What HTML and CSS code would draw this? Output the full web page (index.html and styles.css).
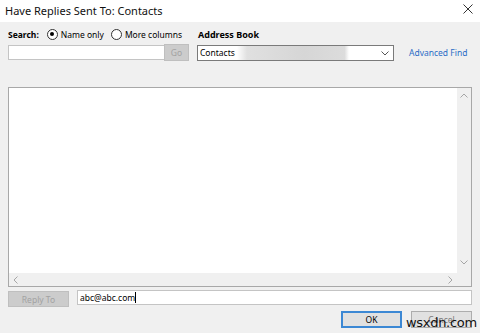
FILE: index.html
```html
<!DOCTYPE html>
<html>
  <head>
    <meta charset="utf-8" />
    <link rel="stylesheet" href="styles.css">
  </head>
  <body>
    <div id="dialog">
      <div class="titlebar">
        <span class="title">Have Replies Sent To: Contacts</span>
        <svg class="close" width="10" height="10" viewBox="0 0 10 10"><path d="M0.5 0.5L9.5 9.5M9.5 0.5L0.5 9.5" stroke="#333" stroke-width="1"/></svg>
      </div>
      <div class="panel">
        <div class="top">
          <div class="searchrow">
            <b>Search:</b>
            <span class="radio on"></span><span>Name only</span>
            <span class="radio"></span><span>More columns</span>
          </div>
          <b class="ablabel">Address Book</b>
          <span></span>
          <div class="searchbox"><span class="input"></span><span class="btn disabled go">Go</span></div>
          <div class="select">
            <span>Contacts</span><span class="blur"></span>
            <svg class="arrow" width="8" height="5" viewBox="0 0 8 5"><path d="M0.5 0.5L4 4L7.5 0.5" fill="none" stroke="#555" stroke-width="1"/></svg>
          </div>
          <a class="adv">Advanced Find</a>
        </div>
        <div class="list">
          <div class="listmain">
            <div class="area"></div>
            <div class="vscroll">
              <svg width="8" height="5" viewBox="0 0 8 5"><path d="M0.5 4.5L4 1L7.5 4.5" fill="none" stroke="#a6a6a6"/></svg>
              <svg width="8" height="5" viewBox="0 0 8 5"><path d="M0.5 0.5L4 4L7.5 0.5" fill="none" stroke="#a6a6a6"/></svg>
            </div>
          </div>
          <div class="hscroll">
            <svg width="5" height="8" viewBox="0 0 5 8"><path d="M4.5 0.5L1 4L4.5 7.5" fill="none" stroke="#a6a6a6"/></svg>
            <svg width="5" height="8" viewBox="0 0 5 8"><path d="M0.5 0.5L4 4L0.5 7.5" fill="none" stroke="#a6a6a6"/></svg>
            <span class="corner"></span>
          </div>
        </div>
        <div class="replyrow">
          <span class="btn disabled reply">Reply To</span>
          <span class="input replyinput">abc@abc.com<i class="caret"></i></span>
        </div>
        <div class="footer">
          <span class="btn ok">OK</span>
          <span class="btn cancel">Cancel<span class="mark">wsxdn.com</span></span>
        </div>
      </div>
    </div>
  </body>
</html>
```
FILE: styles.css
```css
/* base */
html,body{margin:0;padding:0;}
body{width:480px;height:333px;overflow:hidden;font-family:"Segoe UI","Noto Sans",sans-serif;font-size:8.5px;color:#000;white-space:nowrap;}

/* dialog */
#dialog{width:480px;height:333px;display:flex;flex-direction:column;background:#f0f0f0;}
.titlebar{height:22px;background:#fff;display:flex;align-items:center;justify-content:space-between;padding:0 7px 2px 5px;box-sizing:border-box;}
.title{font-size:11px;color:#111;}
.close{margin-top:-2px;}

.panel{flex:1;padding:0 8px;display:flex;flex-direction:column;}

.top{display:grid;grid-template-columns:181px 197px auto;grid-template-rows:12px 17px;column-gap:8px;row-gap:4px;margin-top:6px;align-items:center;}
.searchrow{display:flex;align-items:center;gap:3px;}
.searchrow b{margin-right:5px;}
.searchrow .radio + span{margin-right:4px;}
.radio{flex-shrink:0;width:11px;height:11px;border:1px solid #333;border-radius:50%;box-sizing:border-box;position:relative;background:#fff;}
.radio.on::after{content:"";position:absolute;left:2.5px;top:2.5px;width:4px;height:4px;border-radius:50%;background:#000;}
.ablabel{padding-left:1px;font-size:9px;}

.searchbox{display:flex;height:17px;}
.input{background:#fff;border:1px solid #c4c4c4;box-sizing:border-box;display:flex;align-items:center;padding-left:2px;}
.searchbox .input{flex:1;height:15px;margin-top:1px;border-right:0;}

.btn{display:flex;align-items:center;justify-content:center;box-sizing:border-box;background:#e1e1e1;border:1px solid #adadad;}
.btn.disabled{background:#cccccc;border-color:#bfbfbf;color:#a2a2a2;}
.go{width:25px;}

.select{height:16px;background:#fff;border:1px solid #7a7a7a;box-sizing:border-box;display:flex;align-items:center;padding-left:2px;position:relative;}
.select .blur{width:112px;height:14px;margin-left:2px;background:linear-gradient(to right,#fff 0,#e0e0e0 10px,#d6d6d6 60%,#dcdcdc 96%,#fff 100%);}
.select .arrow{position:absolute;right:4px;top:5px;}
.adv{color:#2a6cc6;margin-left:7px;}

.list{margin-top:26px;height:200px;border:1px solid #a8a8a8;box-sizing:border-box;display:flex;flex-direction:column;background:#fff;}
.listmain{flex:1;display:flex;}
.area{flex:1;}
.vscroll{width:14px;background:#f0f0f0;display:flex;flex-direction:column;justify-content:space-between;align-items:center;padding:5px 0 8px;box-sizing:border-box;}
.hscroll{height:13px;background:#f0f0f0;display:flex;align-items:center;justify-content:space-between;padding-left:4px;}
.hscroll svg:nth-child(2){margin-left:auto;margin-right:4px;}
.corner{width:14px;height:13px;background:#f0f0f0;}

.replyrow{display:flex;gap:8px;margin-top:3px;align-items:flex-start;}
.reply{width:61px;height:16px;margin-top:1px;}
.replyinput{flex:1;height:15px;}
.caret{display:inline-block;width:1px;height:11px;background:#000;}

.footer{display:flex;justify-content:flex-end;gap:9px;margin-top:4px;}
.ok{width:61px;height:17px;border:2px solid #3c88d4;}
.cancel{width:61px;height:17px;color:#7a7a7a;position:relative;}
.mark{position:absolute;left:-6px;top:3px;font-family:"DejaVu Sans",sans-serif;font-size:13px;color:#111;letter-spacing:-0.3px;}
```
